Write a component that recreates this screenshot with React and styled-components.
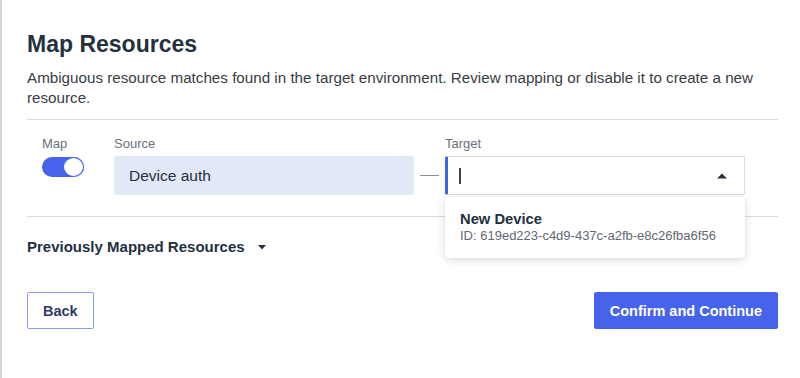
import React from "react";
import styled, { createGlobalStyle } from "styled-components";

const Global = createGlobalStyle`
  html, body { margin: 0; padding: 0; background: #fff; }
  body { font-family: "Liberation Sans", Arial, sans-serif; }
  * { box-sizing: border-box; }
`;

const Page = styled.div`
  min-height: 378px;
  border-left: 2px solid #d6d6d6;
  padding: 31px 22px 0 25px;
`;

const Title = styled.h1`
  margin: 0;
  font-size: 23px;
  line-height: 26px;
  font-weight: 700;
  color: #23313f;
`;

const Description = styled.p`
  margin: 11px 0 0;
  font-size: 15.2px;
  line-height: 19.5px;
  color: #383d44;
`;

const Divider = styled.div`
  height: 1px;
  background: #d7dbe1;
  margin-top: ${(p) => p.$mt}px;
`;

const MapRow = styled.div`
  display: grid;
  grid-template-columns: 72px 300px 31px 300px;
  grid-template-rows: auto 39px;
  row-gap: 4px;
  padding: 16px 0 21px 15px;
`;

const Label = styled.div`
  font-size: 13px;
  line-height: 16px;
  color: #6a717b;
`;

const Toggle = styled.div`
  width: 42px;
  height: 20px;
  margin-top: 1px;
  border-radius: 10px;
  background: #4763ec;
  display: flex;
  justify-content: flex-end;
`;

const Knob = styled.div`
  width: 21px;
  height: 20px;
  border-radius: 50%;
  background: #fff;
  border: 1.5px solid #4763ec;
`;

const SourceBox = styled.div`
  background: #e3e8f6;
  border-radius: 3px;
  display: flex;
  align-items: center;
  padding-left: 15px;
  font-size: 15.5px;
  color: #23313f;
`;

const DashCell = styled.div`
  display: flex;
  align-items: center;
  padding-left: 6px;
`;

const Dash = styled.div`
  width: 19px;
  height: 1px;
  background: #8a9098;
`;

const TargetWrap = styled.div`
  position: relative;
`;

const TargetInput = styled.div`
  height: 39px;
  border: 1px solid #d7dbe1;
  border-left: 3px solid #4763ec;
  border-radius: 2px;
  display: flex;
  align-items: center;
  justify-content: space-between;
  padding: 0 17px 0 11px;
`;

const Cursor = styled.span`
  width: 1.5px;
  height: 16px;
  background: #3b4552;
`;

const Menu = styled.div`
  position: absolute;
  top: 41px;
  left: 0;
  width: 300px;
  background: #fff;
  border-radius: 4px;
  box-shadow: 0 2px 8px rgba(20, 30, 50, 0.16), 0 0 1px rgba(20, 30, 50, 0.12);
  padding: 13px 15px 14px;
  z-index: 2;
`;

const OptionName = styled.div`
  font-size: 14.75px;
  line-height: 18px;
  font-weight: 700;
  color: #23313f;
`;

const OptionId = styled.div`
  font-size: 13px;
  line-height: 16px;
  color: #5f6873;
`;

const Section = styled.div`
  margin-top: 21px;
  display: flex;
  align-items: center;
  font-size: 15px;
  line-height: 18px;
  font-weight: 700;
  color: #23313f;
`;

const Caret = styled.svg`
  margin-left: 13px;
  margin-top: 1px;
`;

const Footer = styled.div`
  margin-top: 36px;
  display: flex;
  justify-content: space-between;
`;

const Button = styled.button`
  height: 37px;
  padding: 0 15px;
  border-radius: 2px;
  font-family: "Liberation Sans", Arial, sans-serif;
  font-size: 14.5px;
  font-weight: 700;
  display: inline-flex;
  align-items: center;
  cursor: pointer;
  border: 1px solid ${(p) => (p.$primary ? "#4763ec" : "#8b9dfa")};
  background: ${(p) => (p.$primary ? "#4763ec" : "#fff")};
  color: ${(p) => (p.$primary ? "#fff" : "#2d3b66")};
`;

export default function App() {
  return (
    <>
      <Global />
      <Page>
        <Title>Map Resources</Title>
        <Description>
          Ambiguous resource matches found in the target environment. Review mapping or disable it to create a new
          resource.
        </Description>
        <Divider $mt={12} />
        <MapRow>
          <Label>Map</Label>
          <Label>Source</Label>
          <div />
          <Label>Target</Label>
          <div>
            <Toggle>
              <Knob />
            </Toggle>
          </div>
          <SourceBox>Device auth</SourceBox>
          <DashCell>
            <Dash />
          </DashCell>
          <TargetWrap>
            <TargetInput>
              <Cursor />
              <svg width="10" height="6" viewBox="0 0 10 6">
                <path d="M0 5.5 L5 0.5 L10 5.5 Z" fill="#23313f" />
              </svg>
            </TargetInput>
            <Menu>
              <OptionName>New Device</OptionName>
              <OptionId>ID: 619ed223-c4d9-437c-a2fb-e8c26fba6f56</OptionId>
            </Menu>
          </TargetWrap>
        </MapRow>
        <Divider $mt={0} />
        <Section>
          Previously Mapped Resources
          <Caret width="8" height="5" viewBox="0 0 8 5">
            <path d="M0 0 L8 0 L4 4.5 Z" fill="#23313f" />
          </Caret>
        </Section>
        <Footer>
          <Button>Back</Button>
          <Button $primary>Confirm and Continue</Button>
        </Footer>
      </Page>
    </>
  );
}
